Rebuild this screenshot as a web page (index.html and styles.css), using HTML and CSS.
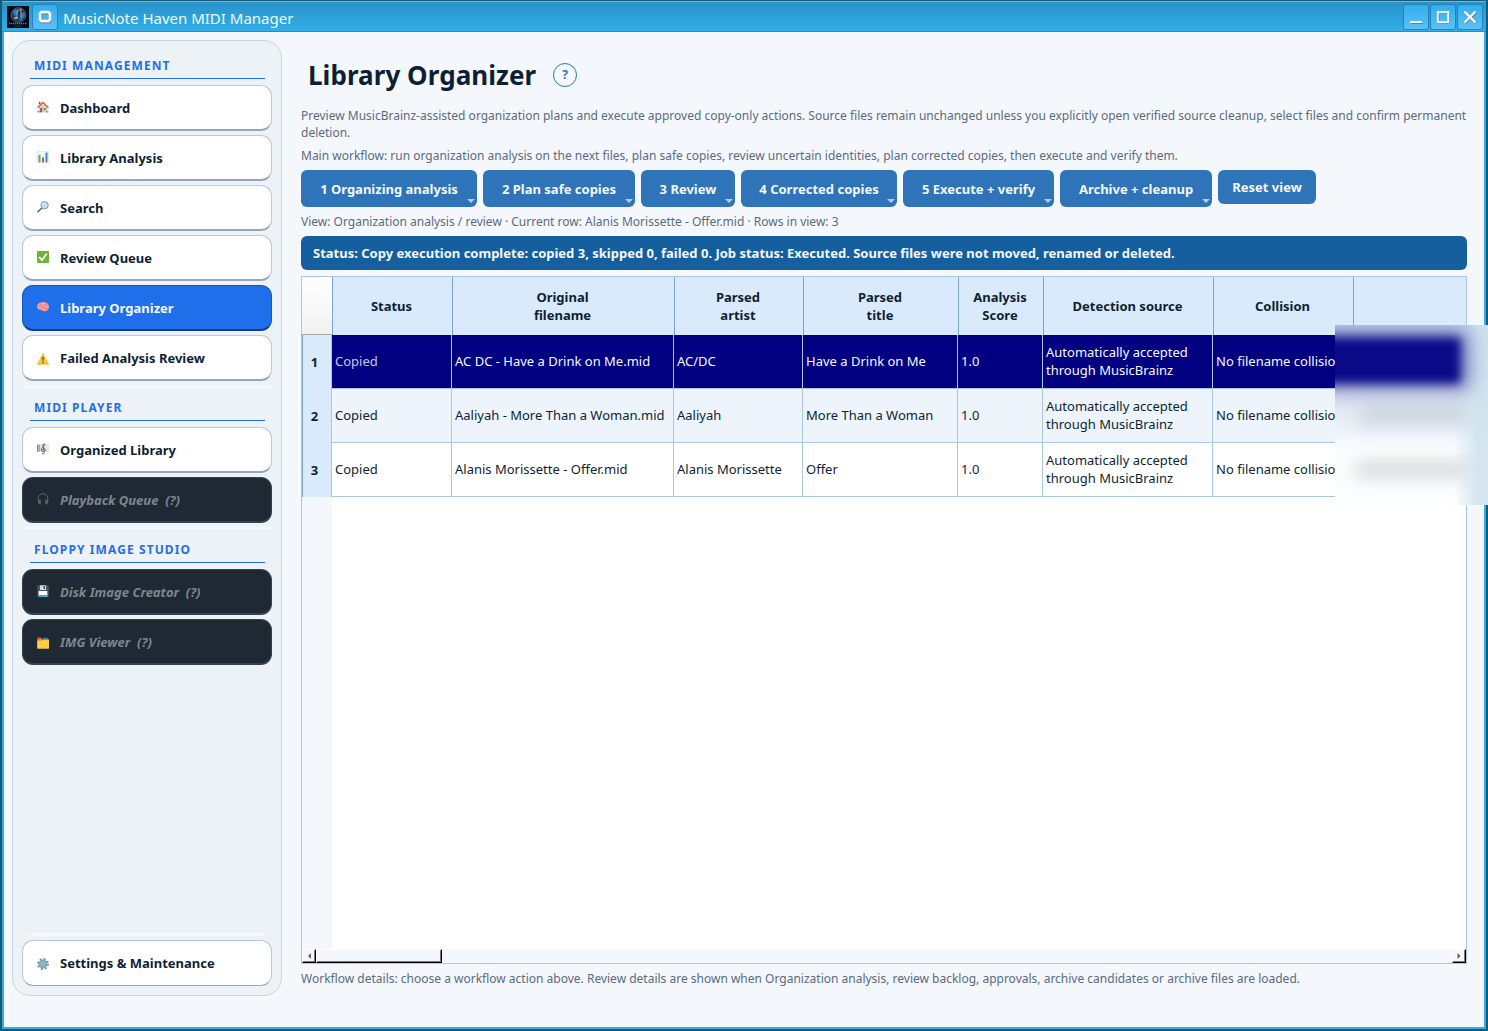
FILE: index.html
```
<!DOCTYPE html>
<html lang="en">
<head>
    <meta charset="UTF-8">
    <meta name="viewport" content="width=device-width, initial-scale=1.0">
    <title>MusicNote Haven MIDI Manager</title>
    <link rel="stylesheet" href="styles.css">
</head>
<body>
    <div class="window">
        <header class="titlebar">
            <svg class="app-logo" viewBox="0 0 22 22">
                <rect width="22" height="22" fill="#050914"/>
                <circle cx="11.500" cy="9" r="7.300" fill="#26364f" stroke="#4f637d" stroke-width="1"/>
                <path d="M6 5l3-2 2 2-1 4-3 1zM14 8l3-2 1 4-4 5-2-1z" fill="#2f78bd"/>
                <path d="M10 12V5l4-2v8" fill="none" stroke="#93abc2" stroke-width="1"/>
                <ellipse cx="9" cy="12" rx="2" ry="1.300" fill="#93abc2"/>
                <path d="M2 17.500h18" stroke="#5e6e85" stroke-width="1.400" stroke-dasharray="1.400 .600"/>
                <path d="M7 20h8" stroke="#2a3a52" stroke-width="1"/>
            </svg>
            <span class="win-btn">
                <svg viewBox="0 0 24 24"><path d="M8.500 8.500h9v9h-9z" fill="none" stroke="#7f8f99" stroke-width="2"/><path d="M8.500 7h7l1.500 1.500v6L15.500 16h-7L7 14.500v-6z" fill="none" stroke="#fff" stroke-width="2.500"/></svg>
            </span>
            <span class="window-title">MusicNote Haven MIDI Manager</span>
            <span class="win-btn">
                <svg viewBox="0 0 24 24"><path d="M7 18.500h12" stroke="#777" stroke-width="1"/><path d="M6 17h12" stroke="#fff" stroke-width="2"/></svg>
            </span>
            <span class="win-btn">
                <svg viewBox="0 0 24 24"><path d="M8 8h10v10H8z" fill="none" stroke="#888" stroke-width="1.500"/><path d="M6.800 6.800h10.400v10.400H6.800z" fill="none" stroke="#fff" stroke-width="1.800"/></svg>
            </span>
            <span class="win-btn">
                <svg viewBox="0 0 24 24"><path d="M7.500 7.500l10.500 10.500M18 7.500L7.500 18" stroke="#777" stroke-width="2.200"/><path d="M6.500 6.500l11 11M17.500 6.500l-11 11" stroke="#fff" stroke-width="2.200"/></svg>
            </span>
        </header>

        <div class="container">
            <nav class="sidebar">
                <h2>MIDI MANAGEMENT</h2>
                <a class="nav-item" href="#">
                    <svg viewBox="0 0 12 12"><path d="M1.500 5.500h9V11.300h-9z" fill="#ddd2bb"/><path d="M0 6.200L6 .5l6 5.700-1.200 1L6 2.800 1.200 7.200z" fill="#db6440"/><path d="M6 2.800l4 3.700H2z" fill="#ddd2bb"/><path d="M1.800.800h1.700v2.500H1.800z" fill="#a34a35"/><path d="M3.200 7h2v4.300h-2z" fill="#8b5a3c"/><path d="M6.600 7h2.600v2.200H6.600z" fill="#5f9fc4"/><path d="M.5 10h2v1.500h-2zM9 10.200h2.500v1.300H9z" fill="#78a045"/></svg>
                    Dashboard
                </a>
                <a class="nav-item" href="#">
                    <svg viewBox="0 0 12 12"><rect x=".2" y=".2" width="11.6" height="11.6" fill="#f4f6f7" stroke="#d3d9dc" stroke-width=".5"/><path d="M.5 3h11M.5 6h11M.5 9h11" stroke="#dbe1e4" stroke-width=".4"/><path d="M1.500 4h2v7.300h-2z" fill="#4bb75a"/><path d="M5 6.500h2v4.800H5z" fill="#e7453c"/><path d="M8.500 1.500h2v9.800h-2z" fill="#2d8fdd"/></svg>
                    Library Analysis
                </a>
                <a class="nav-item" href="#">
                    <svg viewBox="0 0 12 12"><path d="M4.600 7.200L.9 10.800" stroke="#54616a" stroke-width="1.500" stroke-linecap="round"/><circle cx="7.600" cy="4.300" r="3.700" fill="#b5e0f5" stroke="#7e919c" stroke-width=".9"/><path d="M5.700 4a2 2 0 012-1.800" fill="none" stroke="#fff" stroke-width=".8"/></svg>
                    Search
                </a>
                <a class="nav-item" href="#">
                    <svg viewBox="0 0 12 12"><rect width="12" height="12" rx=".8" fill="#6fb33b"/><path d="M2.200 6.200l2.800 3L9.800 2.500" fill="none" stroke="#fff" stroke-width="1.800"/></svg>
                    Review Queue
                </a>
                <a class="nav-item active" href="#">
                    <svg viewBox="0 0 12 12"><path d="M.1 6C-.2 3.500 1.600 1.500 4 1.500 7.500.2 12 2.400 12 6c0 1.500-.7 2.500-1.800 2.900-.2 1.400-2.700 1.900-3.700 1C4.700 9.600 4.500 8.700 4 8.700 2 9.200.4 8 .1 6z" fill="#f79a9d"/><path d="M2 5c1-1.500 2-.5 3-1.500M5 6.500c1.300.300 1.800-1.500 3-1M8 3.500c1-.2 1.500.8 2.500.7M7 8c1-.8 2-.2 3-.8" fill="none" stroke="#d4686f" stroke-width=".6"/></svg>
                    Library Organizer
                </a>
                <a class="nav-item low" href="#">
                    <svg viewBox="0 0 12 12"><path d="M6 .300L11.900 11.600H.1z" fill="#fcc62e" stroke="#f2b521" stroke-width=".5" stroke-linejoin="round"/><path d="M5.300 4h1.400l-.3 4h-.8z" fill="#3e3830"/><circle cx="6" cy="9.500" r=".8" fill="#3e3830"/></svg>
                    Failed Analysis Review
                </a>
                <hr>
                <h2>MIDI PLAYER</h2>
                <a class="nav-item" href="#">
                    <svg viewBox="0 0 12 12"><path d="M.5 2h11.500M.5 4h11.500M.5 6h11.500M.5 8h11.500" stroke="#8999a3" stroke-width=".5"/><path d="M.6 1.700v7M2 1.700v7" stroke="#627681" stroke-width=".9"/><path d="M5 10.500c2 1.200 2.500-.5 2.200-2L6 2.500C6 .5 7.500 0 7.600 1.500 7.500 4 4 4.200 4.200 7c.3 2.200 4.500 1.800 4.200-.2C8 5 5.500 5.400 5.900 7.200" fill="none" stroke="#435862" stroke-width=".9"/></svg>
                    Organized Library
                </a>
                <a class="nav-item disabled" href="#">
                    <svg viewBox="0 0 12 12"><path d="M1.200 8V5.500a4.800 4.800 0 019.600 0V8" fill="none" stroke="#69686a" stroke-width="1"/><path d="M3.800 6.500v5C2 11.500.8 10.500.8 9s1-2.500 3-2.500zM8.200 6.500v5c1.800 0 3-1 3-2.500s-1-2.500-3-2.500z" fill="#625f5e"/></svg>
                    Playback Queue&nbsp; (?)
                </a>
                <hr>
                <h2>FLOPPY IMAGE STUDIO</h2>
                <a class="nav-item disabled" href="#">
                    <svg viewBox="0 0 12 12"><path d="M.300.300h10.500l1 1v10.400H.300z" fill="#50565b"/><path d="M3 .300h6v4.700H3z" fill="#d4d8da"/><path d="M6.500 1h1.500v3H6.500z" fill="#4a5056"/><path d="M1.700 6h8.600v5.700H1.700z" fill="#fff"/><path d="M1.700 10h8.600v1.700H1.700z" fill="#25a5d8"/></svg>
                    Disk Image Creator&nbsp; (?)
                </a>
                <a class="nav-item disabled low" href="#">
                    <svg viewBox="0 0 12 12"><path d="M.4 1.500h4l1 1H12V11H.4z" fill="#e7a92c"/><path d="M.800.500h3.500V2.500H.800z" fill="#e0533d"/><path d="M6 .800h5v2H6z" fill="#3b8590"/><path d="M.3 4h5.200l1-1.200h5.400v9H.3z" fill="#fbcd43"/></svg>
                    IMG Viewer&nbsp; (?)
                </a>
                <div class="sidebar-footer">
                    <hr>
                    <a class="nav-item flat low" href="#">
                        <svg viewBox="0 0 12 12"><circle cx="6" cy="6" r="5.100" fill="none" stroke="#7295a3" stroke-width="1.700" stroke-dasharray="2 2.005"/><circle cx="6" cy="6" r="3.300" fill="none" stroke="#7fa9ba" stroke-width="2.400"/><circle cx="6" cy="6" r="1.700" fill="#5d8797"/><circle cx="6" cy="6" r=".8" fill="#d7e5eb"/></svg>
                        Settings &amp; Maintenance
                    </a>
                </div>
            </nav>

            <main class="content">
                <div class="page-head">
                    <h1>Library Organizer</h1>
                    <span class="help">?</span>
                </div>
                <p class="intro">Preview MusicBrainz-assisted organization plans and execute approved copy-only actions. Source files remain unchanged unless you explicitly open verified source cleanup, select files and confirm permanent deletion.</p>
                <p class="workflow">Main workflow: run organization analysis on the next files, plan safe copies, review uncertain identities, plan corrected copies, then execute and verify them.</p>

                <div class="actions">
                    <button class="menu w176">1 Organizing analysis</button>
                    <button class="menu w152">2 Plan safe copies</button>
                    <button class="menu w94">3 Review</button>
                    <button class="menu w156">4 Corrected copies</button>
                    <button class="menu w151">5 Execute + verify</button>
                    <button class="menu w152">Archive + cleanup</button>
                    <button class="reset">Reset view</button>
                </div>

                <p class="view-info">View: Organization analysis / review · Current row: Alanis Morissette - Offer.mid · Rows in view: 3</p>
                <div class="status">Status: Copy execution complete: copied 3, skipped 0, failed 0. Job status: Executed. Source files were not moved, renamed or deleted.</div>

                <section class="table-section">
                    <div class="table-body">
                        <table>
                            <colgroup>
                                <col class="c-num"><col class="c-status"><col class="c-file"><col class="c-artist"><col class="c-title"><col class="c-score"><col class="c-source"><col class="c-collision"><col>
                            </colgroup>
                            <thead>
                                <tr>
                                    <th class="corner"></th>
                                    <th>Status</th>
                                    <th>Original<br>filename</th>
                                    <th>Parsed<br>artist</th>
                                    <th>Parsed<br>title</th>
                                    <th>Analysis<br>Score</th>
                                    <th>Detection source</th>
                                    <th>Collision</th>
                                    <th></th>
                                </tr>
                            </thead>
                            <tbody>
                                <tr class="selected">
                                    <th>1</th>
                                    <td class="dim">Copied</td>
                                    <td>AC DC - Have a Drink on Me.mid</td>
                                    <td>AC/DC</td>
                                    <td>Have a Drink on Me</td>
                                    <td>1.0</td>
                                    <td>Automatically accepted through MusicBrainz</td>
                                    <td class="clip">No filename collision</td>
                                    <td></td>
                                </tr>
                                <tr class="alt">
                                    <th>2</th>
                                    <td>Copied</td>
                                    <td>Aaliyah - More Than a Woman.mid</td>
                                    <td>Aaliyah</td>
                                    <td>More Than a Woman</td>
                                    <td>1.0</td>
                                    <td>Automatically accepted through MusicBrainz</td>
                                    <td class="clip">No filename collision</td>
                                    <td></td>
                                </tr>
                                <tr>
                                    <th>3</th>
                                    <td>Copied</td>
                                    <td>Alanis Morissette - Offer.mid</td>
                                    <td>Alanis Morissette</td>
                                    <td>Offer</td>
                                    <td>1.0</td>
                                    <td>Automatically accepted through MusicBrainz</td>
                                    <td class="clip">No filename collision</td>
                                    <td></td>
                                </tr>
                            </tbody>
                        </table>
                    </div>
                    <div class="scrollbar">
                        <span class="arrow"><svg viewBox="0 0 12 12"><path d="M8 3L5 6l3 3z" fill="#5d6670"/></svg></span>
                        <span class="thumb"></span>
                        <span class="arrow right"><svg viewBox="0 0 12 12"><path d="M4.500 3l3 3-3 3z" fill="#5d6670"/></svg></span>
                    </div>
                    <div class="privacy">
                        <div class="smear white"></div>
                        <div class="smear text-a"></div>
                        <div class="smear text-b"></div>
                        <div class="smear edge"></div>
                        <div class="smear haze"></div>
                        <div class="smear navy"></div>
                    </div>
                </section>

                <p class="details">Workflow details: choose a workflow action above. Review details are shown when Organization analysis, review backlog, approvals, archive candidates or archive files are loaded.</p>
            </main>
        </div>
    </div>
</body>
</html>
```
FILE: styles.css
```
* {
    box-sizing: border-box;
}

body {
    margin: 0;
    font-family: "Noto Sans", sans-serif;
    font-size: 13px;
    color: #0f1f33;
    overflow: hidden;
}

.window {
    display: flex;
    flex-direction: column;
    height: 1031px;
    border: 2px solid #1a5877;
    border-top: 1px solid #1a5877;
    background-color: #f4f7fc;
    box-shadow: inset 2px 0 #31ade8, inset -2px 0 #31ade8, inset 0 -2px #31ade8;
}

/* title bar */
.titlebar {
    display: flex;
    align-items: center;
    height: 31px;
    padding: 1px 2px 0 5px;
    background: linear-gradient(#2893c9, #31ade8);
    border-top: 1px solid #5cbdf2;
    border-bottom: 1px solid #218fc6;
}

.app-logo {
    width: 22px;
    height: 22px;
    margin-right: 3px;
}

.win-btn {
    width: 26px;
    height: 26px;
    margin-right: 1px;
    border: 1px solid #2384b5;
    border-radius: 3px;
    background: linear-gradient(#32aeed, #5bc0fa);
}

.win-btn svg {
    display: block;
    width: 24px;
    height: 24px;
}

.window-title {
    flex: 1;
    padding: 2px 0 0 4px;
    color: #f4faff;
    font-size: 15px;
}

.container {
    flex: 1;
    display: flex;
    padding: 8px 19px 31px 10px;
    min-height: 0;
}

/* sidebar */
.sidebar {
    display: flex;
    flex-direction: column;
    width: 270px;
    height: 956px;
    padding: 5px 9px 9px;
    border: 1px solid #c5d5e5;
    border-radius: 18px;
    background-color: #edf2f7;
}

.sidebar h2 {
    height: 33px;
    margin: 0 7px 6px 8px;
    padding: 11px 0 0 4px;
    border-bottom: 1px solid #1f6feb;
    color: #1f6feb;
    font-size: 12px;
    line-height: 17px;
    letter-spacing: 1.1px;
}

.sidebar hr {
    width: 100%;
    height: 3px;
    margin: 0;
    border: none;
    background-color: #f4f7fc;
}

.nav-item {
    display: flex;
    align-items: center;
    flex: none;
    height: 46px;
    margin-bottom: 4px;
    padding: 0 13px;
    border: 1px solid #b9cadb;
    border-bottom: 2px solid #92a8bd;
    border-radius: 11px;
    background-color: #fff;
    color: #0f1f33;
    font-weight: bold;
    text-decoration: none;
}

.nav-item svg {
    width: 12px;
    height: 12px;
    margin: -1px 11.5px 0 0.5px;
}

.nav-item.low svg {
    margin-top: 2px;
}

.nav-item.active {
    border-color: #1558b5;
    border-bottom-color: #0c3f8f;
    background-color: #1f6feb;
    color: #f4f8ff;
}

.nav-item.disabled {
    border-color: #374151;
    background-color: #1f2933;
    color: #7d8590;
    font-style: italic;
}

.nav-item.flat {
    margin: 0;
    border-bottom: 1px solid #92a8bd;
}

.nav-item.flat svg {
    margin-top: 1px;
}

.sidebar-footer {
    margin-top: auto;
}

.sidebar-footer hr {
    width: auto;
    margin: 0 8px 4px;
}

/* main area */
.content {
    flex: 1;
    display: flex;
    flex-direction: column;
    min-width: 0;
    margin-left: 19px;
}

.content p {
    margin: 0;
    color: #5b6b7e;
    font-size: 12px;
    line-height: 17px;
}

.page-head {
    display: flex;
    align-items: center;
    height: 70px;
    margin-bottom: -3px;
    padding-left: 7px;
}

h1 {
    width: 228px;
    margin: 0 17px 0 0;
    font-size: 26px;
    line-height: 36px;
    letter-spacing: 0.06px;
    white-space: nowrap;
}

.help {
    width: 24px;
    height: 24px;
    border: 1px solid #2f73b8;
    border-radius: 50%;
    color: #2f73b8;
    font-size: 12px;
    font-weight: bold;
    line-height: 22px;
    text-align: center;
}

.content .workflow {
    margin: 6px 0;
}

.actions {
    display: flex;
    gap: 6px;
    align-items: flex-start;
}

button {
    position: relative;
    height: 37px;
    padding: 1px 0 0;
    border: none;
    border-radius: 6px;
    background-color: #2f73b8;
    color: #f4f8ff;
    font-family: inherit;
    font-size: 13px;
    font-weight: bold;
}

.menu::after {
    content: "";
    position: absolute;
    right: 2.5px;
    bottom: 4.5px;
    border: 4px solid transparent;
    border-top-color: #b4cbe4;
    border-bottom: none;
}

.w176 {
    width: 176px;
}

.w152 {
    width: 152px;
}

.w94 {
    width: 94px;
}

.w156 {
    width: 156px;
}

.w151 {
    width: 151px;
}

.reset {
    width: 98px;
    height: 34px;
    padding: 0 0 1px;
}

.content .view-info {
    margin: 6px 0;
}

.status {
    height: 34px;
    margin-bottom: 6px;
    padding-left: 12px;
    border-radius: 6px;
    background-color: #165f9f;
    color: #f4f8ff;
    font-weight: bold;
    line-height: 34px;
}

/* results table */
.table-section {
    position: relative;
    display: flex;
    flex-direction: column;
    height: 688px;
    border: 1px solid #a9c6e3;
    background-color: #fff;
}

.table-body {
    flex: 1;
    background: linear-gradient(90deg, #f4f7fc 30px, #fff 30px);
}

table {
    width: 100%;
    table-layout: fixed;
    border-collapse: separate;
    border-spacing: 0;
}

.c-num { width: 30px; }
.c-status { width: 120px; }
.c-file { width: 222px; }
.c-artist { width: 129px; }
.c-title { width: 155px; }
.c-score { width: 85px; }
.c-source { width: 170px; }
.c-collision { width: 140px; }

th, td {
    padding: 0 3px;
    line-height: 18px;
}

th {
    background-color: #d9eafc;
}

thead th {
    height: 58px;
    padding: 0 4px 0 2px;
    border-left: 1px solid #79a5d0;
}

thead th.corner {
    border-left: none;
    border-bottom: 1px solid #aaa;
    background: linear-gradient(#fff, #f1f1f1);
}

tbody th {
    padding: 0 5px 0 0;
    border-left: 1px solid #79a5d0;
    border-right: 1px solid #a9c6e3;
}

td {
    height: 54px;
    padding: 0 1px 1px 3px;
    border-right: 1px solid #a9c6e3;
    border-bottom: 1px solid #a9c6e3;
    text-align: left;
}

td.clip {
    white-space: nowrap;
    overflow: hidden;
}

.alt td {
    background-color: #edf4fb;
}

.selected td {
    background-color: #000080;
    color: #f4f8ff;
}

.selected td.dim {
    color: #c5cbe6;
}

/* horizontal scroll bar */
.scrollbar {
    display: flex;
    height: 14px;
    background-color: #f4f7fc;
}

.arrow,
.thumb {
    width: 14px;
    height: 14px;
    border: 1px solid #fff;
    border-right: 1px solid #000;
    border-bottom: 1px solid #000;
    box-shadow: inset -1px -1px #777;
    background-color: #f4f7fc;
}

.arrow svg {
    display: block;
    width: 12px;
    height: 12px;
}

.thumb {
    width: 126px;
}

.arrow.right {
    margin-left: auto;
}

/* blurred strip over the private columns */
.privacy {
    position: absolute;
    left: 1033px;
    top: 48px;
    width: 153px;
    height: 180px;
    overflow: hidden;
    background: linear-gradient(#c8daed 0, #d3dfef 50px, #e2e9f2 85px, #eff5fd 112px, #f8fafc 135px, #f8fafc);
}

.smear {
    position: absolute;
}

.smear.edge {
    right: 0;
    top: 0;
    width: 34px;
    height: 180px;
    background: linear-gradient(90deg, transparent, #cfe2ed 70%);
    opacity: 0.85;
}

.smear.haze {
    left: -30px;
    top: 6px;
    width: 163px;
    height: 58px;
    background-color: #3c3ca4;
    opacity: 0.7;
    filter: blur(10px);
}

.smear.navy {
    left: -30px;
    top: 13px;
    width: 155px;
    height: 45px;
    background-color: #0a0a88;
    filter: blur(5px);
}

.smear.text-a {
    left: 25px;
    top: 83px;
    width: 110px;
    height: 14px;
    background-color: #c4ccd5;
    filter: blur(9px);
}

.smear.white {
    left: -20px;
    top: 118px;
    width: 152px;
    height: 80px;
    background-color: #fcfdfe;
    filter: blur(8px);
}

.smear.text-b {
    left: 20px;
    top: 138px;
    width: 115px;
    height: 13px;
    background-color: #cfcfd2;
    filter: blur(9px);
}

.content .details {
    margin-top: 6px;
}
```
